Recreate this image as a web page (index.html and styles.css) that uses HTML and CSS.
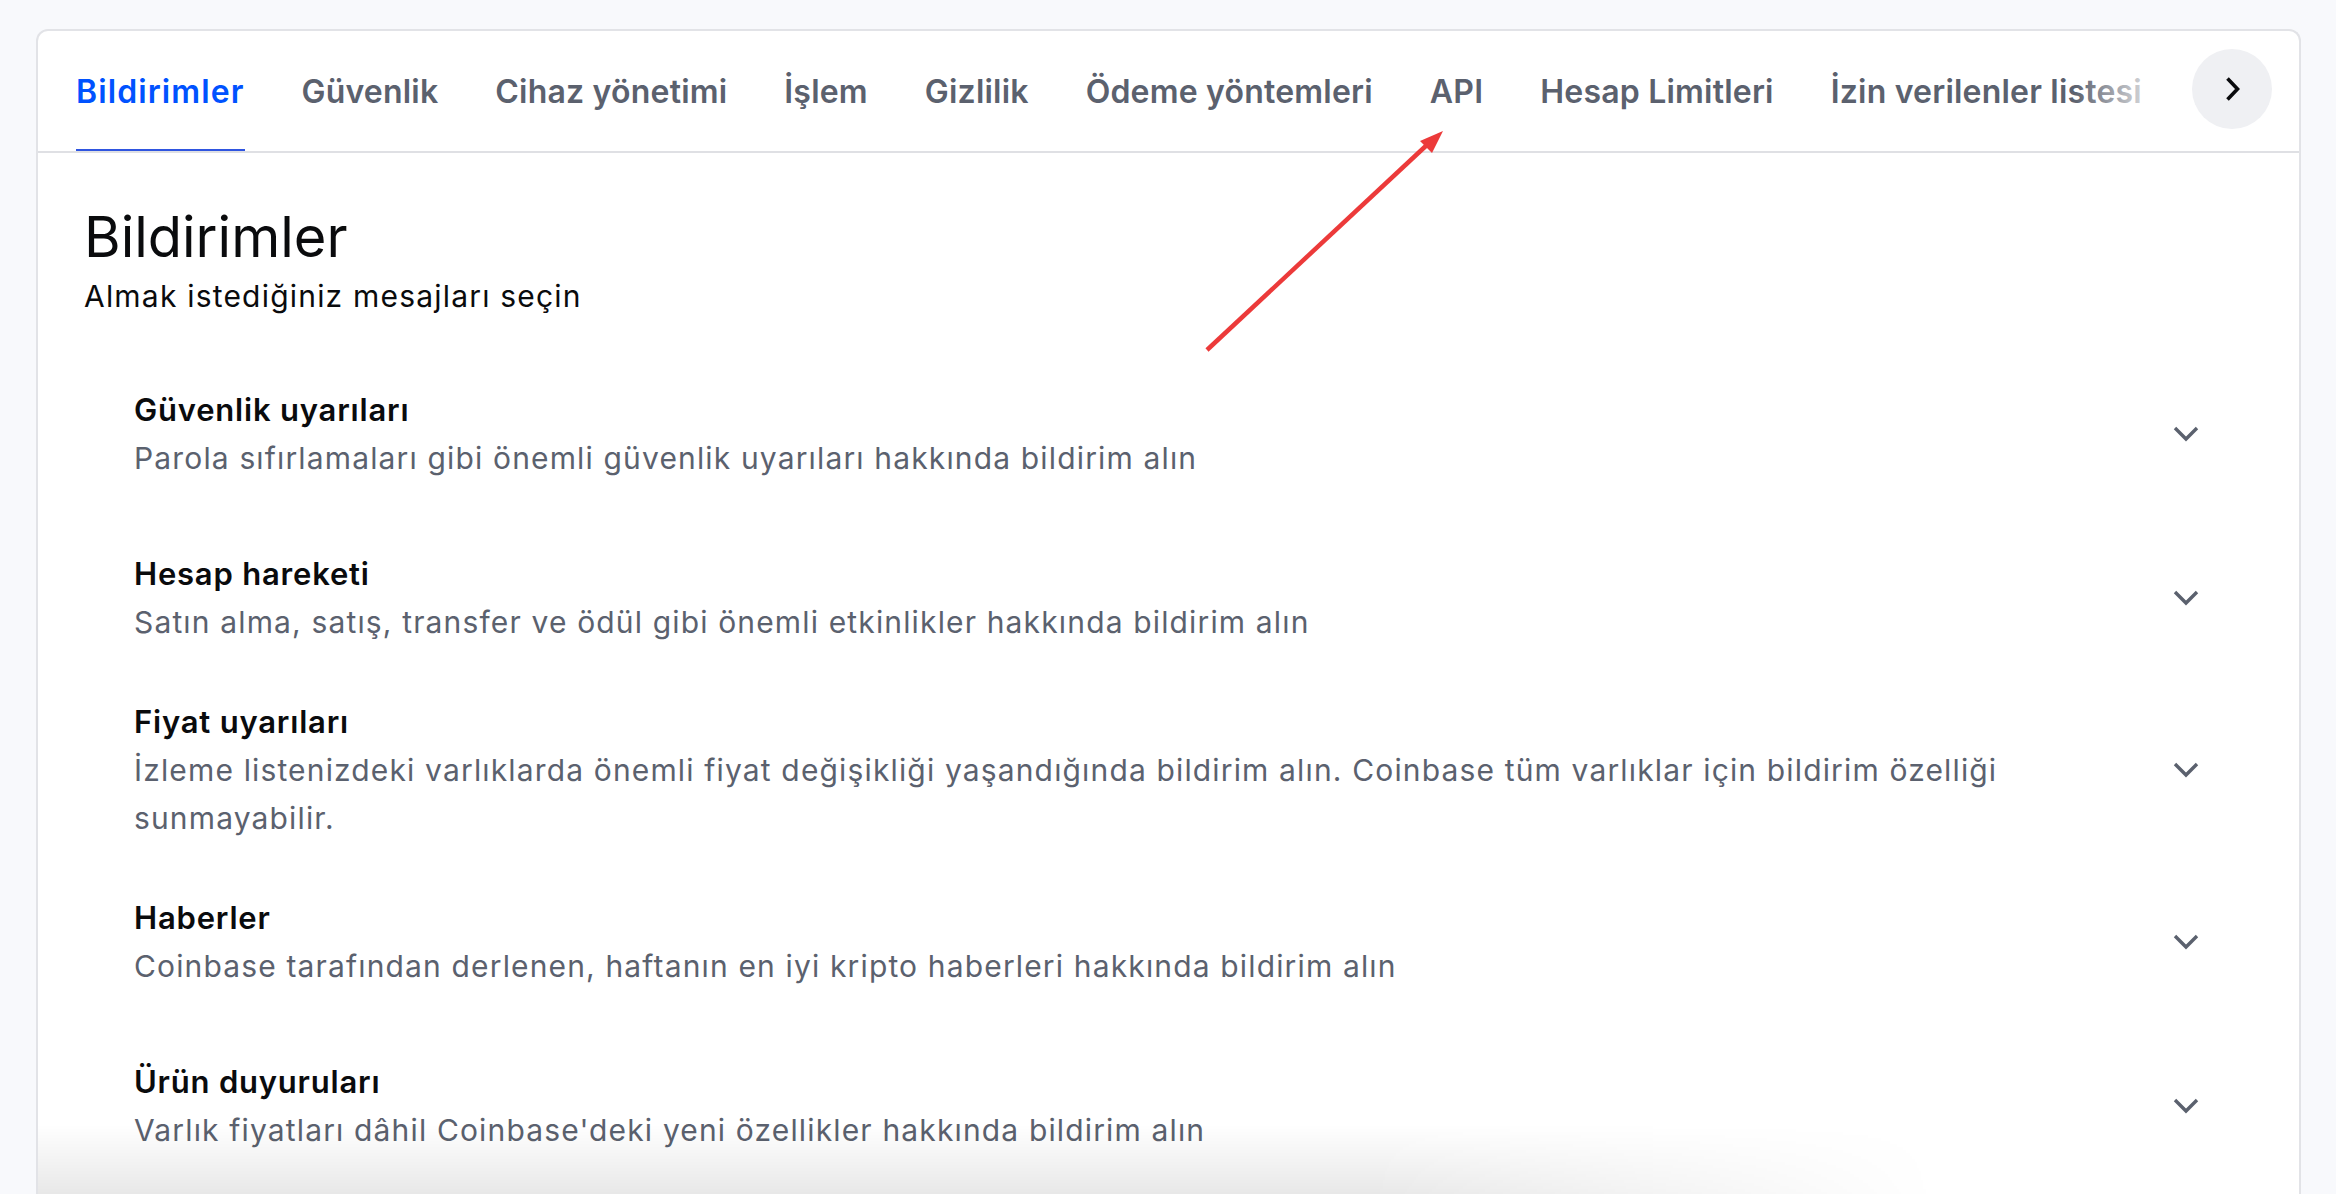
FILE: index.html
```html
<!DOCTYPE html>
<html lang="tr">
<head>
    <meta charset="UTF-8">
    <meta name="viewport" content="width=device-width, initial-scale=1.0">
    <title>Bildirimler</title>
    <link rel="stylesheet" href="styles.css">
</head>
<body>
    <div class="card">
        <div class="tabs">
            <div class="tab-list">
                <div class="tab active">Bildirimler</div>
                <div class="tab">Güvenlik</div>
                <div class="tab">Cihaz yönetimi</div>
                <div class="tab">İşlem</div>
                <div class="tab">Gizlilik</div>
                <div class="tab">Ödeme yöntemleri</div>
                <div class="tab">API</div>
                <div class="tab">Hesap Limitleri</div>
                <div class="tab">İzin verilenler listesi</div>
            </div>
            <button class="next-btn" aria-label="Sonraki">
                <svg width="16" height="24" viewBox="0 0 16 24"><path d="M2.5 1.5 L12.5 12 L2.5 22.5" fill="none" stroke="#0a0b0d" stroke-width="3.6"/></svg>
            </button>
        </div>

        <div class="content">
            <h1>Bildirimler</h1>
            <p class="subtitle">Almak istediğiniz mesajları seçin</p>

            <div class="list">
                <div class="row">
                    <div class="row-text">
                        <div class="row-title">Güvenlik uyarıları</div>
                        <div class="row-desc">Parola sıfırlamaları gibi önemli güvenlik uyarıları hakkında bildirim alın</div>
                    </div>
                    <div class="chevron"><svg width="26" height="16" viewBox="0 0 26 16"><path d="M2 2 L13 13 L24 2" fill="none" stroke="#5b616e" stroke-width="3.4"/></svg></div>
                </div>
                <div class="row">
                    <div class="row-text">
                        <div class="row-title">Hesap hareketi</div>
                        <div class="row-desc">Satın alma, satış, transfer ve ödül gibi önemli etkinlikler hakkında bildirim alın</div>
                    </div>
                    <div class="chevron"><svg width="26" height="16" viewBox="0 0 26 16"><path d="M2 2 L13 13 L24 2" fill="none" stroke="#5b616e" stroke-width="3.4"/></svg></div>
                </div>
                <div class="row">
                    <div class="row-text">
                        <div class="row-title">Fiyat uyarıları</div>
                        <div class="row-desc">İzleme listenizdeki varlıklarda önemli fiyat değişikliği yaşandığında bildirim alın. Coinbase tüm varlıklar için bildirim özelliği sunmayabilir.</div>
                    </div>
                    <div class="chevron"><svg width="26" height="16" viewBox="0 0 26 16"><path d="M2 2 L13 13 L24 2" fill="none" stroke="#5b616e" stroke-width="3.4"/></svg></div>
                </div>
                <div class="row">
                    <div class="row-text">
                        <div class="row-title">Haberler</div>
                        <div class="row-desc">Coinbase tarafından derlenen, haftanın en iyi kripto haberleri hakkında bildirim alın</div>
                    </div>
                    <div class="chevron"><svg width="26" height="16" viewBox="0 0 26 16"><path d="M2 2 L13 13 L24 2" fill="none" stroke="#5b616e" stroke-width="3.4"/></svg></div>
                </div>
                <div class="row">
                    <div class="row-text">
                        <div class="row-title">Ürün duyuruları</div>
                        <div class="row-desc">Varlık fiyatları dâhil Coinbase'deki yeni özellikler hakkında bildirim alın</div>
                    </div>
                    <div class="chevron"><svg width="26" height="16" viewBox="0 0 26 16"><path d="M2 2 L13 13 L24 2" fill="none" stroke="#5b616e" stroke-width="3.4"/></svg></div>
                </div>
            </div>
        </div>
    </div>

    <div class="bottom-shade"></div>

    <svg class="annotation" width="2336" height="1194" viewBox="0 0 2336 1194">
        <line x1="1207" y1="350" x2="1429" y2="143" stroke="#ec3a3a" stroke-width="4.5"/>
        <polygon points="1443,131 1420,141 1432,153" fill="#ec3a3a"/>
    </svg>
</body>
</html>
```

FILE: styles.css
```css
html, body {
    height: 100%;
}
body {
    margin: 0;
    padding: 29px 35px 0 36px;
    box-sizing: border-box;
    background-color: #f8f9fc;
    font-family: 'Inter', 'Liberation Sans', sans-serif;
    color: #0a0b0d;
    overflow: hidden;
}
.card {
    height: 100%;
    background-color: #fff;
    border: 2px solid #e2e3e7;
    border-bottom: none;
    border-radius: 12px 12px 0 0;
    box-sizing: border-box;
}
.tabs {
    display: flex;
    align-items: center;
    height: 122px;
    border-bottom: 2px solid #dfe0e4;
    box-sizing: border-box;
    padding-left: 38px;
    padding-right: 27px;
}
.tab-list {
    flex: 1;
    display: flex;
    gap: 57px;
    height: 100%;
    overflow: hidden;
    position: relative;
    margin-right: 38px;
}
.tab-list::after {
    content: '';
    position: absolute;
    top: 0;
    right: 0;
    width: 80px;
    height: 100%;
    background: linear-gradient(to right, rgba(255, 255, 255, 0), rgba(255, 255, 255, 0.6) 70%, rgba(255, 255, 255, 0.8));
}
.tab {
    display: flex;
    align-items: center;
    height: 100%;
    box-sizing: border-box;
    font-size: 32px;
    font-weight: 600;
    letter-spacing: 0.2px;
    color: #5b616e;
    white-space: nowrap;
    padding-top: 2px;
    border-bottom: 2px solid transparent;
}
.tab.active {
    color: #0052ff;
    letter-spacing: 1.1px;
    border-bottom-color: #2f55e0;
}
.next-btn {
    flex: none;
    width: 80px;
    height: 80px;
    border: none;
    border-radius: 50%;
    background-color: #eff0f3;
    display: flex;
    align-items: center;
    justify-content: center;
    padding: 0;
    margin-bottom: 4px;
}
.next-btn svg {
    margin-left: 2px;
}
.content {
    padding: 52px 46px 0 46px;
}
h1 {
    margin: 0 0 7px;
    font-size: 56px;
    line-height: 64px;
    font-weight: 400;
}
.subtitle {
    margin: 0;
    font-size: 30px;
    line-height: 40px;
    letter-spacing: 1.2px;
}
.list {
    margin-top: 36px;
    padding: 0 43px 0 50px;
}
.row {
    display: flex;
    align-items: center;
    min-height: 164px;
    padding: 18px 0;
    box-sizing: border-box;
}
.row-text {
    flex: 1;
    margin-right: 70px;
}
.row-title {
    font-size: 31px;
    line-height: 48px;
    font-weight: 600;
    letter-spacing: 0.8px;
}
.row-desc {
    font-size: 30px;
    line-height: 48px;
    letter-spacing: 1.15px;
    color: #5b616e;
}
.chevron {
    width: 48px;
    height: 48px;
    display: flex;
    align-items: center;
    justify-content: center;
}
.bottom-shade {
    position: absolute;
    left: 38px;
    bottom: 0;
    width: 1900px;
    height: 70px;
    background: linear-gradient(to bottom, rgba(0, 0, 0, 0), rgba(0, 0, 0, 0.09));
    -webkit-mask-image: linear-gradient(to right, #000 70%, transparent);
    mask-image: linear-gradient(to right, #000 70%, transparent);
    pointer-events: none;
}
.annotation {
    position: absolute;
    top: 0;
    left: 0;
    pointer-events: none;
}
```
